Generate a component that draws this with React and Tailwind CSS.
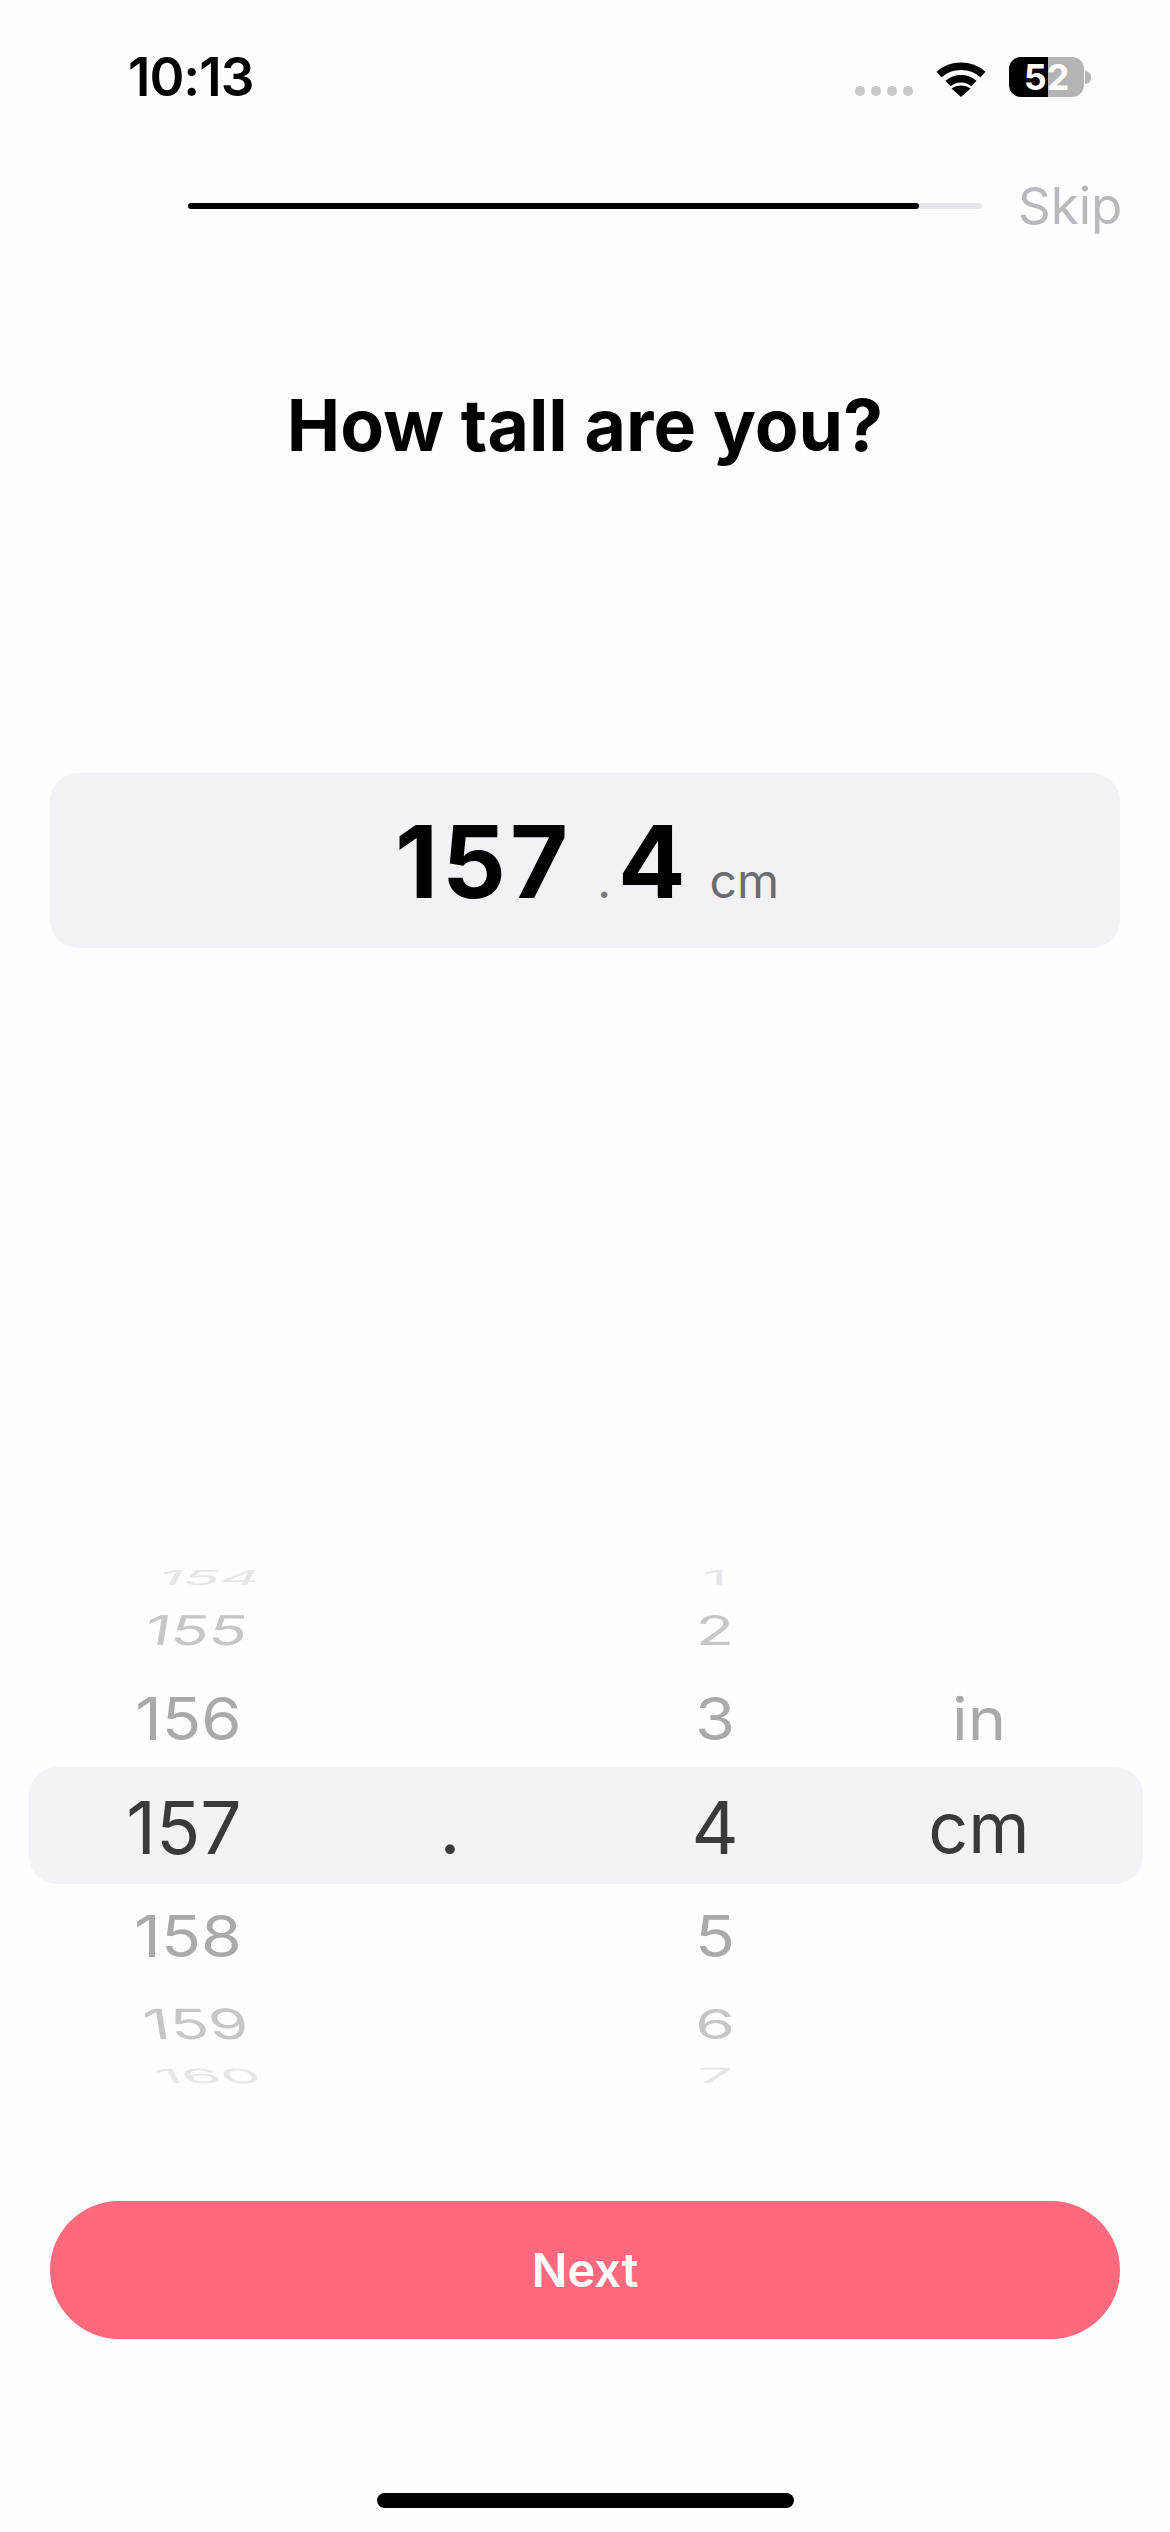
const FONT = "font-['Inter',sans-serif]";

function WifiIcon() {
  return (
    <svg width="50" height="37" viewBox="0 0 50 37" fill="none">
      <path d="M3 14.5C15.5 3.5 34.5 3.5 47 14.5" stroke="#000" strokeWidth="7.5" />
      <path d="M12 23.5C19.5 17 30.5 17 38 23.5" stroke="#000" strokeWidth="7.5" />
      <path d="M25 37L15.5 28.5C21 24.5 29 24.5 34.5 28.5Z" fill="#000" />
    </svg>
  );
}

function Row({ height, active, children }) {
  return (
    <div
      className={`grid grid-cols-[310px_222px_308px_220px] grid-rows-[100%] items-center ${height} ${
        active ? "bg-[#f3f2f7] rounded-[28px] pt-[4px]" : ""
      }`}
    >
      {children}
    </div>
  );
}

export default function App() {
  return (
    <div className={`${FONT} w-[1170px] h-[2532px] bg-[#fefefe] flex flex-col overflow-hidden`}>
      {/* Status bar */}
      <div className="flex items-start pt-[57px] pl-[128px] h-[160px]">
        <span className="text-[53px] leading-[40px] font-semibold text-black tracking-[-1px]">10:13</span>
        <div className="ml-auto mr-[79px] flex items-end gap-[23px]">
          <div className="flex gap-[6px] pb-[1px]">
            <span className="w-[10px] h-[10px] rounded-full bg-[#c9c9cb]" />
            <span className="w-[10px] h-[10px] rounded-full bg-[#c9c9cb]" />
            <span className="w-[10px] h-[10px] rounded-full bg-[#c9c9cb]" />
            <span className="w-[10px] h-[10px] rounded-full bg-[#c9c9cb]" />
          </div>
          <WifiIcon />
          <div className="flex items-center gap-[1px]">
            <div className="relative w-[75px] h-[40px] flex">
              <div className="w-[39px] h-full bg-black rounded-l-[12px]" />
              <div className="w-[36px] h-full bg-[#b4b4b6] rounded-r-[12px]" />
              <span className="absolute inset-0 flex items-center justify-center text-white text-[36px] font-bold leading-none">
                52
              </span>
            </div>
            <div className="w-[6px] h-[13px] rounded-r-full bg-[#b4b4b6]" />
          </div>
        </div>
      </div>

      {/* Progress */}
      <div className="flex items-center h-[46px] pl-[188px] mt-[23px]">
        <div className="w-[794px] h-[6px] bg-[#e5e5ea] rounded-full">
          <div className="w-[731px] h-full bg-black rounded-full" />
        </div>
        <span className="ml-[36px] text-[51px] leading-[46px] text-[#b9b9bd]">Skip</span>
      </div>

      {/* Title */}
      <h1 className="mt-[156px] text-center text-[71.5px] leading-[80px] font-bold text-black">How tall are you?</h1>

      {/* Value card */}
      <div className="mx-[50px] mt-[308px] h-[175px] rounded-[28px] bg-[#f2f1f5] flex items-baseline justify-center pt-[34px] pl-[4px]">
        <span className="text-[100px] leading-[110px] font-bold text-black tracking-[4px]">157</span>
        <span className="ml-[25px] text-[48px] text-[#777]">.</span>
        <span className="ml-[7px] text-[100px] leading-[110px] font-bold text-black">4</span>
        <span className="ml-[24px] text-[48px] text-[#6c6c70]">cm</span>
      </div>

      {/* Wheel picker */}
      <div className="mx-[29px] mt-[615px] w-[1114px] flex flex-col text-center">
        <Row height="h-[28px]">
          <span className="pl-[51px] text-[61px] leading-none text-[#e6e6e8] scale-y-[0.34] skew-x-[-10deg]">154</span>
          <span />
          <span className="text-[61px] leading-none text-[#e6e6e8] scale-y-[0.34]">1</span>
          <span />
        </Row>
        <Row height="h-[78px]">
          <span className="pl-[25px] text-[63px] leading-none text-[#c6c6c8] scale-y-[0.65] skew-x-[-6deg]">155</span>
          <span />
          <span className="text-[63px] leading-none text-[#c6c6c8] scale-y-[0.65]">2</span>
          <span />
        </Row>
        <Row height="h-[98px]">
          <span className="pl-[9px] text-[65px] leading-none text-[#aaaaac] scale-y-[0.91]">156</span>
          <span />
          <span className="text-[65px] leading-none text-[#aaaaac] scale-y-[0.91]">3</span>
          <span className="text-[65px] leading-none text-[#aaaaac] scale-y-[0.91]">in</span>
        </Row>
        <Row height="h-[117px]" active>
          <span className="text-[73px] leading-none text-[#3a3a3c]">157</span>
          <span className="text-[73px] leading-none text-[#3a3a3c]">.</span>
          <span className="text-[73px] leading-none text-[#3a3a3c]">4</span>
          <span className="text-[70px] leading-none text-[#3a3a3c]">cm</span>
        </Row>
        <Row height="h-[104px]">
          <span className="pl-[8px] text-[66px] leading-none text-[#aaaaac] scale-y-[0.87]">158</span>
          <span />
          <span className="text-[66px] leading-none text-[#aaaaac] scale-y-[0.87]">5</span>
          <span />
        </Row>
        <Row height="h-[72px]">
          <span className="pl-[24px] text-[64px] leading-none text-[#c6c6c8] scale-y-[0.65] skew-x-[6deg]">159</span>
          <span />
          <span className="text-[64px] leading-none text-[#c6c6c8] scale-y-[0.65]">6</span>
          <span />
        </Row>
        <Row height="h-[32px]">
          <span className="pl-[48px] text-[63px] leading-none text-[#e6e6e8] scale-y-[0.31] skew-x-[10deg]">160</span>
          <span />
          <span className="text-[63px] leading-none text-[#e6e6e8] scale-y-[0.31]">7</span>
          <span />
        </Row>
      </div>

      {/* Next button */}
      <button className="mx-[50px] mt-[109px] h-[138px] rounded-[69px] bg-[#fe697e] text-white text-[47px] font-semibold">
        Next
      </button>

      {/* Home indicator */}
      <div className="mx-auto mt-[154px] w-[417px] h-[15px] rounded-full bg-black" />
    </div>
  );
}
